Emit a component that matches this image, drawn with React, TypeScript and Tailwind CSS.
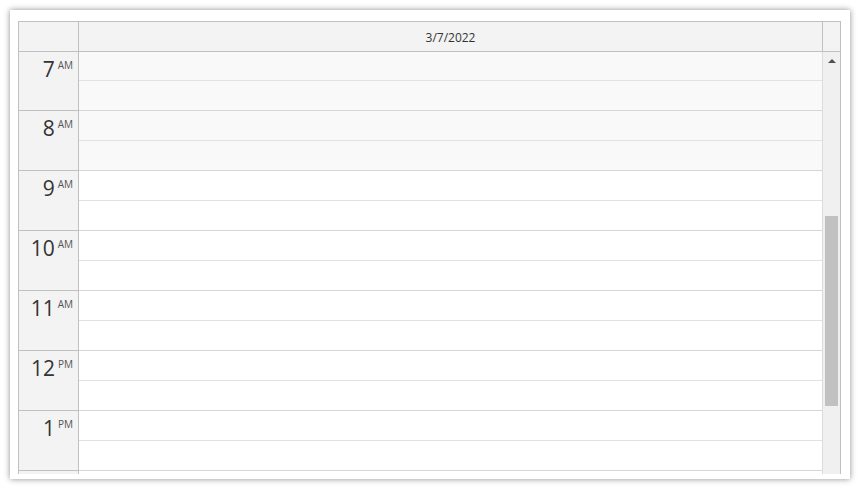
const hours = [
  { h: "7", ap: "AM", off: true },
  { h: "8", ap: "AM", off: true },
  { h: "9", ap: "AM", off: false },
  { h: "10", ap: "AM", off: false },
  { h: "11", ap: "AM", off: false },
  { h: "12", ap: "PM", off: false },
  { h: "1", ap: "PM", off: false },
];

export default function App() {
  return (
    <div
      className="h-[489px] w-[860px] overflow-hidden bg-white p-[10px]"
      style={{ fontFamily: '"Open Sans", "Noto Sans", sans-serif' }}
    >
      <div className="h-[469px] w-[840px] bg-white pl-[8px] pr-[9px] pt-[11px] shadow-[0_0_6px_rgba(0,0,0,0.45)]">
        <div className="flex h-[453px] flex-col overflow-hidden border-x border-t border-[#c0c0c0]">
          {/* header */}
          <div className="flex h-[30px] shrink-0 border-b border-[#c0c0c0] bg-[#f3f3f3]">
            <div className="w-[60px] border-r border-[#c0c0c0]" />
            <div className="flex flex-1 items-center justify-center border-r border-[#c0c0c0] pt-[3px] text-[12px] text-[#333]">
              3/7/2022
            </div>
            <div className="w-[17px]" />
          </div>

          {/* body */}
          <div className="flex flex-1 overflow-hidden">
            <div className="w-[60px] shrink-0 border-r border-[#c0c0c0] bg-[#f3f3f3]">
              {hours.map((r, i) => (
                <div
                  key={r.h + r.ap}
                  className={`flex justify-end border-b border-[#c0c0c0] pr-[5px] pt-[5px] text-[#333] ${i === 0 ? "h-[59px]" : "h-[60px]"}`}
                >
                  <span className="text-[21px] leading-[24px]">{r.h}</span>
                  <span className="ml-[3px] pt-[2px] text-[10px] leading-[12px] text-[#555]">{r.ap}</span>
                </div>
              ))}
              <div className="h-[30px] border-b border-[#c0c0c0]" />
            </div>

            <div className="flex-1 border-r border-[#dcdcdc]">
              {hours.map((r, i) => (
                <div key={r.h + r.ap} className={r.off ? "bg-[#f9f9f9]" : "bg-white"}>
                  <div className={`border-b border-[#e2e2e2] ${i === 0 ? "h-[29px]" : "h-[30px]"}`} />
                  <div className="h-[30px] border-b border-[#d6d6d6]" />
                </div>
              ))}
              <div className="h-[30px] border-b border-[#e2e2e2]" />
            </div>

            {/* scrollbar */}
            <div className="relative w-[17px] shrink-0 bg-[#f0f0f0]">
              <div className="flex h-[17px] items-center justify-center pt-[1px]">
                <div className="h-0 w-0 border-x-[4px] border-b-[4px] border-x-transparent border-b-[#505050]" />
              </div>
              <div className="absolute left-[2px] top-[164px] h-[190px] w-[13px] bg-[#c1c1c1]" />
            </div>
          </div>
        </div>
      </div>
    </div>
  );
}
